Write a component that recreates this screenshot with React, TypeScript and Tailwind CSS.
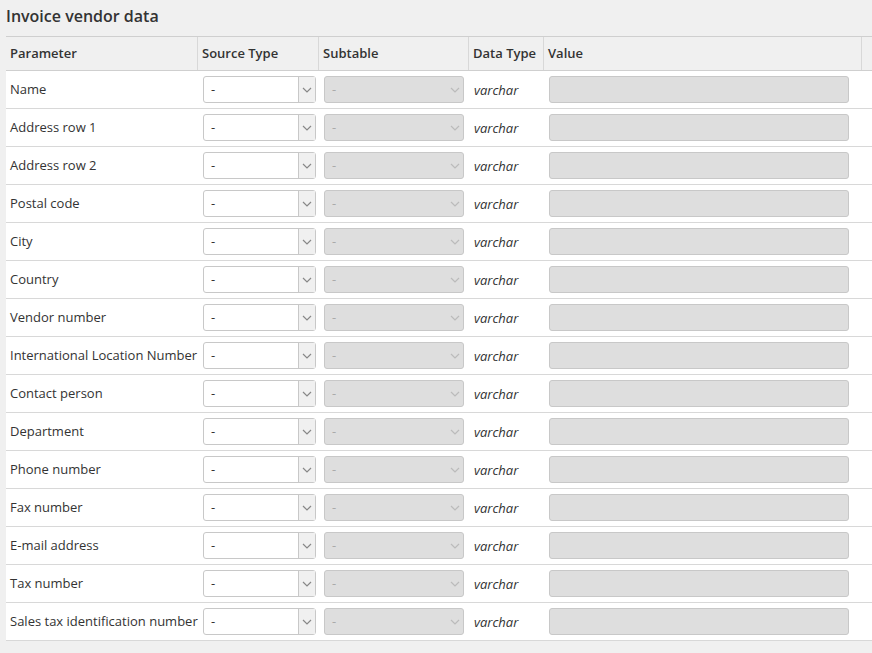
import React from "react";

const rows = ["Name","Address row 1","Address row 2","Postal code","City","Country","Vendor number","International Location Number","Contact person","Department","Phone number","Fax number","E-mail address","Tax number","Sales tax identification number"];

const Chev = ({c}:{c:string}) => (
  <svg width="10" height="6" viewBox="0 0 10 6"><path d="M1 1l4 4 4-4" fill="none" stroke={c} strokeWidth="1.2"/></svg>
);

export default function App() {
  return (
    <div className="w-[872px] h-[653px] bg-[#f0f0f0] overflow-hidden text-[13px] text-[#333]" style={{fontFamily:'"Open Sans", sans-serif'}}>
      <div className="h-[36px] pl-[6px] pt-[4px] text-[16px] font-semibold text-[#333]">Invoice vendor data</div>
      <div className="ml-[6px] w-[880px] border-t border-[#cfcfcf]">
        <div className="flex h-[34px] items-center font-semibold bg-[#f0f0f0] border-b border-[#cfcfcf]">
          <div className="w-[192px] pl-[4px] h-full flex items-center border-r border-[#d8d8d8]">Parameter</div>
          <div className="w-[121px] pl-[4px] h-full flex items-center border-r border-[#d8d8d8]">Source Type</div>
          <div className="w-[150px] pl-[4px] h-full flex items-center border-r border-[#d8d8d8]">Subtable</div>
          <div className="w-[75px] pl-[4px] h-full flex items-center border-r border-[#d8d8d8]">Data Type</div>
          <div className="w-[318px] pl-[4px] h-full flex items-center border-r border-[#d8d8d8]">Value</div>
          <div className="flex-1" />
        </div>
        {rows.map((r) => (
          <div key={r} className="flex h-[38px] items-center bg-white border-b border-[#d8d8d8]">
            <div className="w-[192px] pl-[4px]">{r}</div>
            <div className="w-[121px] pl-[5px]">
              <div className="w-[113px] h-[27px] border border-[#c8c8c8] rounded-[3px] bg-white flex items-center">
                <span className="flex-1 pl-[7px]">-</span>
                <span className="w-[17px] h-full border-l border-[#c8c8c8] bg-[#f0f0f0] flex items-center justify-center"><Chev c="#888"/></span>
              </div>
            </div>
            <div className="w-[150px] pl-[5px]">
              <div className="w-[140px] h-[27px] border border-[#c8c8c8] rounded-[3px] bg-[#dedede] flex items-center text-[#aaa]">
                <span className="flex-1 pl-[7px]">-</span>
                <span className="w-[17px] h-full flex items-center justify-center"><Chev c="#bbb"/></span>
              </div>
            </div>
            <div className="w-[75px] pl-[5px] italic pt-[2px]">varchar</div>
            <div className="w-[318px] pl-[5px]">
              <div className="w-[300px] h-[27px] border border-[#c8c8c8] rounded-[3px] bg-[#dedede]" />
            </div>
            <div className="flex-1" />
          </div>
        ))}
      </div>
    </div>
  );
}
